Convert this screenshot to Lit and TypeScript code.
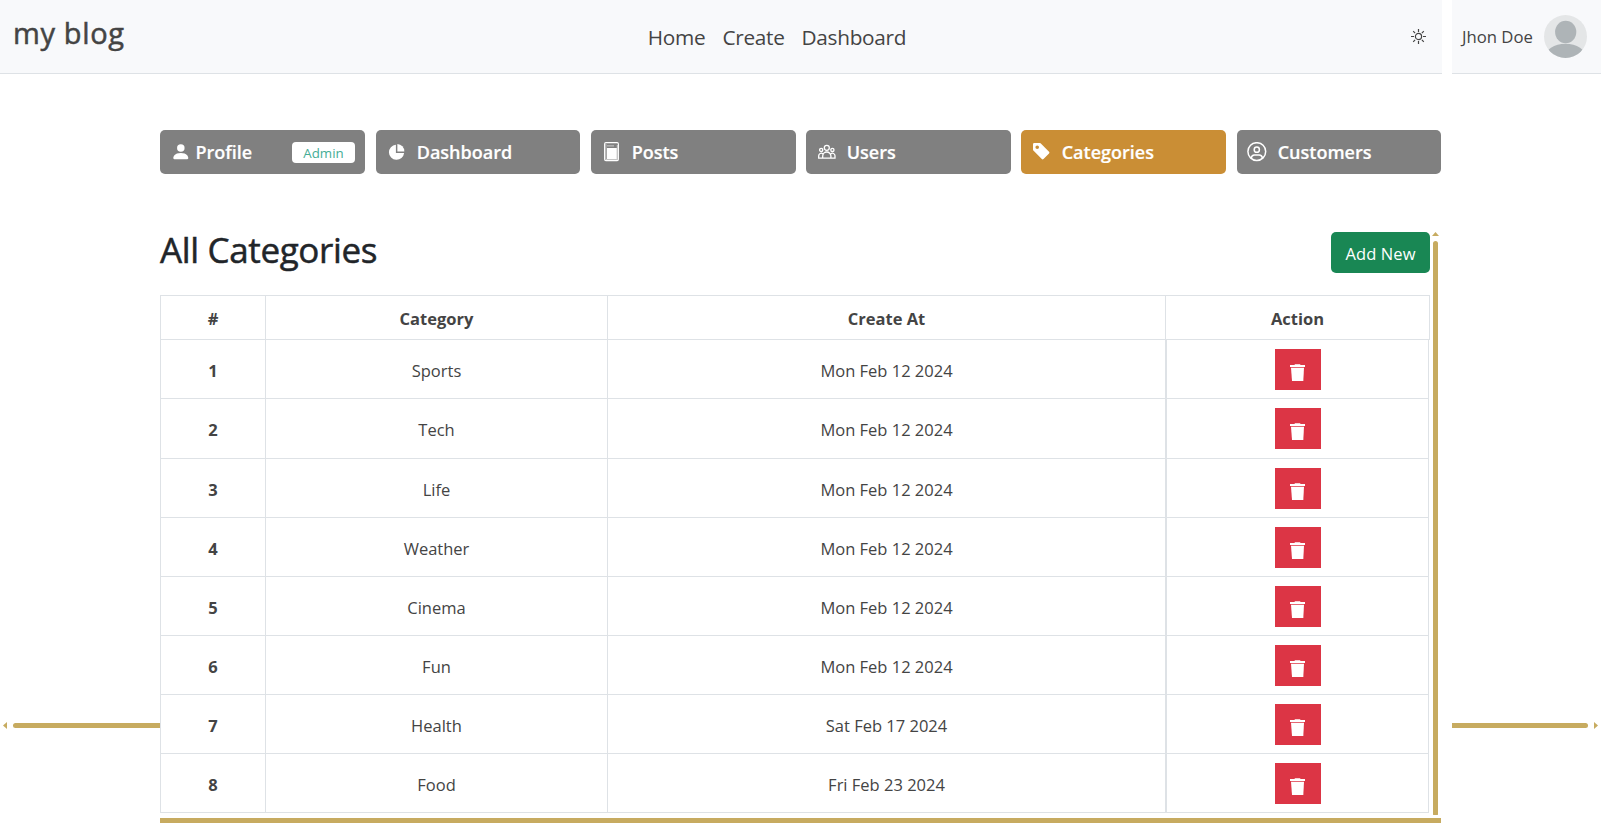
import { LitElement, html, css, svg } from "lit";
import { customElement } from "lit/decorators.js";

const ICONS: Record<string, unknown> = {
  profile: svg`<path d="M3 14s-1 0-1-1 1-4 6-4 6 3 6 4-1 1-1 1zm5-6a3 3 0 1 0 0-6 3 3 0 0 0 0 6"/>`,
  dashboard: svg`<path d="M9.9 2.7A7.6 7.6 0 1 0 18.1 11.1H9.9z"/><path d="M11.4 2A7.2 7.2 0 0 1 18.3 9.4H11.4z"/>`,
  tag: svg`<path d="M2 1a1 1 0 0 0-1 1v4.586a1 1 0 0 0 .293.707l7 7a1 1 0 0 0 1.414 0l4.586-4.586a1 1 0 0 0 0-1.414l-7-7A1 1 0 0 0 6.586 1zm4 3.5a1.5 1.5 0 1 1-3 0 1.5 1.5 0 0 1 3 0"/>`,
};

const NAV = [
  { label: "Profile", icon: "profile", badge: "Admin" },
  { label: "Dashboard", icon: "dashboard" },
  { label: "Posts", icon: "posts" },
  { label: "Users", icon: "users" },
  { label: "Categories", icon: "tag", active: true },
  { label: "Customers", icon: "customers" },
];

const ROWS = [
  ["Sports", "Mon Feb 12 2024"],
  ["Tech", "Mon Feb 12 2024"],
  ["Life", "Mon Feb 12 2024"],
  ["Weather", "Mon Feb 12 2024"],
  ["Cinema", "Mon Feb 12 2024"],
  ["Fun", "Mon Feb 12 2024"],
  ["Health", "Sat Feb 17 2024"],
  ["Food", "Fri Feb 23 2024"],
];

@customElement("app-root")
export class AppRoot extends LitElement {
  static styles = css`
    :host { display: block; position: relative; width: 1601px; height: 835px; overflow: hidden; background: #fff; color: #444;
      font-family: "Open Sans", "Noto Sans", sans-serif; font-size: 16.5px; line-height: 24px; }
    * { box-sizing: border-box; }
    .header { display: grid; grid-template-columns: 1442px 149px; column-gap: 10px; height: 74px; }
    .bar { display: grid; grid-template-columns: 1fr auto 1fr; background: #f8f9fb; border-bottom: 1px solid #dee2e6; }
    .brand { padding: 15px 0 0 13px; font-size: 29px; line-height: 36px; font-weight: 500; letter-spacing: 0.65px; -webkit-text-stroke: 0.5px #444; }
    .links { display: flex; gap: 17px; padding: 22px 0 0 112px; font-size: 20.8px; line-height: 30px; letter-spacing: -0.3px; }
    .theme { justify-self: end; padding: 29px 16px 0 0; line-height: 0; }
    .user { display: flex; align-items: center; background: #f8f9fb; border-bottom: 1px solid #dee2e6; padding-left: 10px; }
    .user-name { width: 82px; font-size: 16.7px; white-space: nowrap; }
    .content { width: 1281px; margin-left: 160px; }
    .nav { display: grid; grid-template-columns: 216px 215px 215px 215px 216px 204px; margin-top: 56px; }
    .card { display: flex; align-items: center; height: 44px; margin-right: 11px; border-radius: 5px; background: #808080; color: #fff; font-size: 18px; font-weight: 600; padding: 0 10px; letter-spacing: 0; -webkit-text-stroke: 0.2px; }
    .card:nth-child(3), .card:nth-child(4) { margin-right: 10px; }
    .card:last-child { margin-right: 0; }
    .card.active { background: #ca8e35; }
    .icon { display: flex; width: 20px; height: 20px; margin-right: 10.7px; }
    .card.has-badge .icon { margin-right: 5.5px; }
    .badge { margin-left: auto; height: 21px; width: 63px; border-radius: 4px; background: #fff; color: #45ad95; font-size: 13.3px; font-weight: 400; line-height: 22px; text-align: center; -webkit-text-stroke: 0; }
    .panel { display: grid; grid-template-columns: 1270px 11px; margin-top: 58px; height: 586px; }
    .title-row { display: flex; justify-content: space-between; height: 63px; }
    .title { margin: 0; font-size: 35px; line-height: 35px; font-weight: 500; color: #212529; letter-spacing: -0.35px; -webkit-text-stroke: 0.5px #212529; }
    .add { width: 99px; height: 41px; border-radius: 5px; background: #198754; color: #fff; text-align: center; line-height: 44px; letter-spacing: 0.1px; }
    .table { border-left: 1px solid #dee2e6; width: 1270px; }
    .row { display: grid; grid-template-columns: 105px 342px 558px 263px; width: 1268px; height: 59px; border-bottom: 1px solid #dee2e6; }
    .row:nth-child(3) { height: 60px; }
    .row > div { display: flex; align-items: center; justify-content: center; border-right: 1px solid #dee2e6; padding-top: 3px; }
    .row.head { width: 1269px; height: 45px; border-top: 1px solid #dee2e6; grid-template-columns: 105px 342px 558px 264px; font-weight: 700; }
    .row > .num { font-weight: 700; }
    .row > .act { align-items: flex-start; padding: 9px 0 0 1px; border-left: 1px solid #dee2e6; }
    .del { width: 46px; height: 41px; background: #dc3545; display: grid; place-items: center; padding-top: 7px; }
    .vbar { display: flex; flex-direction: column; align-items: center; }
    .up { width: 7px; height: 4px; background: #c7ab60; clip-path: polygon(50% 0, 100% 100%, 0 100%); }
    .vthumb { width: 5px; height: 574px; margin-top: 5px; background: #c7ab60; border-radius: 3px 3px 1px 1px; }
    .hbar { height: 5px; background: #c7ab60; }
    .page-scroll { position: absolute; left: 3px; top: 722px; display: flex; align-items: center; width: 1595px; height: 7px; }
    .left { width: 4px; height: 7px; background: #c7ab60; clip-path: polygon(0 50%, 100% 0, 100% 100%); }
    .right { width: 4px; height: 7px; background: #c7ab60; clip-path: polygon(0 0, 100% 50%, 0 100%); }
    .seg { height: 5px; background: #c7ab60; }
    .seg.a { width: 147px; margin-left: 6px; border-radius: 3px 0 0 3px; }
    .seg.b { width: 136px; margin: 0 6px 0 auto; border-radius: 0 3px 3px 0; }
  `;

  icon(name: string) {
    if (name === "posts")
      return html`<svg width="20" height="20" viewBox="0 0 20 20"><rect x="3.6" y=".6" width="13.8" height="18" rx="1.3" fill="none" stroke="#fff" stroke-width="1.1"/><path d="M5.9 6h9.9v11H5.9z" fill="#fff"/><path d="M6 3.9h7M4.9 2v15.6h11.4V3" fill="none" stroke="#fff" stroke-width=".6"/></svg>`;
    if (name === "users")
      return html`<svg width="20" height="20" viewBox="0 0 20 20" fill="none" stroke="#fff" stroke-width="1.3"><circle cx="10.8" cy="5.8" r="2.5"/><circle cx="5.2" cy="7.9" r="1.6"/><circle cx="16.4" cy="7.9" r="1.6"/><path d="M6.7 16.2v-2.1a4.1 4.1 0 0 1 8.2 0v2.1zM6.7 16.2H2.7v-2.4a2.6 2.6 0 0 1 4.1-2.1M14.9 16.2H19v-2.4a2.6 2.6 0 0 0-4.1-2.1"/></svg>`;
    if (name === "customers")
      return html`<svg width="20" height="20" viewBox="0 0 20 20" fill="none" stroke="#fff" stroke-width="1.5"><circle cx="9.8" cy="9.6" r="8.9"/><circle cx="9.8" cy="7.7" r="2.6"/><path d="M4.1 16.4c.4-2.3 1.7-3.3 3.3-3.3h4.8c1.7 0 3 1 3.4 3.3"/></svg>`;
    const box: Record<string, string> = { profile: "-0.65 0.2 16 16", dashboard: "0 0 20 20", tag: "-0.67 0.17 16.6 16.6" };
    return html`<svg width="20" height="20" viewBox=${box[name]} fill="#fff">${ICONS[name]}</svg>`;
  }

  render() {
    return html`
      <div class="header">
        <div class="bar">
          <div class="brand">my blog</div>
          <div class="links"><span>Home</span><span>Create</span><span>Dashboard</span></div>
          <div class="theme">
            <svg width="15" height="15" viewBox="0 0 15 15" fill="none" stroke="#444" stroke-width="1.2"><circle cx="7.5" cy="7.5" r="3.1"/><path d="M7.5 0v3M7.5 12v3M0 7.5h3M12 7.5h3M2.2 2.2l1.9 1.9M10.9 10.9l1.9 1.9M2.2 12.8l1.9-1.9M10.9 4.1l1.9-1.9"/></svg>
          </div>
        </div>
        <div class="user">
          <span class="user-name">Jhon Doe</span>
          <svg width="43" height="43" viewBox="0 0 43 43"><defs><clipPath id="c"><circle cx="21.5" cy="21.5" r="21.5"/></clipPath></defs><g clip-path="url(#c)"><path d="M0 0h43v43H0z" fill="#e4e6e7"/><ellipse cx="21.7" cy="17" rx="10.6" ry="11.3" fill="#aeb4b7"/><ellipse cx="21.5" cy="42" rx="20.5" ry="13.2" fill="#aeb4b7"/></g></svg>
        </div>
      </div>
      <div class="content">
        <div class="nav">
          ${NAV.map((n) => html`<div class="card ${n.active ? "active" : ""} ${n.badge ? "has-badge" : ""}"><span class="icon">${this.icon(n.icon)}</span><span>${n.label}</span>${n.badge ? html`<span class="badge">${n.badge}</span>` : ""}</div>`)}
        </div>
        <div class="panel">
          <div>
            <div class="title-row"><h1 class="title">All Categories</h1><div class="add">Add New</div></div>
            <div class="table">
              <div class="row head"><div>#</div><div>Category</div><div>Create At</div><div>Action</div></div>
              ${ROWS.map(([name, date], i) => html`<div class="row"><div class="num">${i + 1}</div><div>${name}</div><div>${date}</div><div class="act"><div class="del"><svg width="16" height="18" viewBox="0 0 16 18" fill="#fff"><path d="M0 1h4.7V.2h5.6V1H15v2H0z"/><path d="M1 3.7h13L13.3 17H2z"/></svg></div></div></div>`)}
            </div>
          </div>
          <div class="vbar"><div class="up"></div><div class="vthumb"></div></div>
        </div>
        <div class="hbar"></div>
      </div>
      <div class="page-scroll"><div class="left"></div><div class="seg a"></div><div class="seg b"></div><div class="right"></div></div>
    `;
  }
}
